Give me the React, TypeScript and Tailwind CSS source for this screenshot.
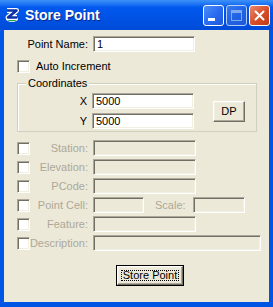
const sunken =
  "border border-t-[#aca899] border-l-[#aca899] border-b-white border-r-white shadow-[inset_1px_1px_0_#716f64,inset_-1px_-1px_0_#f1efe2]";

const raised =
  "border border-t-white border-l-white border-b-[#716f64] border-r-[#716f64] shadow-[inset_-1px_-1px_0_#aca899,inset_1px_1px_0_#f1efe2] bg-[#ece9d8]";

function Field({ value, className }: { value?: string; className: string }) {
  return (
    <div
      className={`h-[16px] ${sunken} ${value !== undefined ? "bg-white" : "bg-[#ece9d8]"} flex items-center pl-[3px] text-black leading-none ${className}`}
    >
      {value}
    </div>
  );
}

function Check() {
  return <div className={`w-[13px] h-[13px] shrink-0 bg-white ${sunken}`} />;
}

function OptionRow({ label }: { label: string }) {
  return (
    <div className="flex items-center h-[16px]">
      <Check />
      <div className="w-[58px] flex justify-end whitespace-nowrap text-[#aca899]">
        {label}
      </div>
      <Field className="ml-[5px] w-[103px]" />
    </div>
  );
}

function AppIcon() {
  return (
    <svg width="16" height="16" viewBox="0 0 16 16">
      <ellipse cx="8" cy="12" rx="6" ry="3" fill="#fff" />
      <ellipse cx="8" cy="12" rx="5" ry="2.2" fill="#1fa83c" />
      <path
        d="M3 3.5 H12.5 L4 10.5 H13"
        fill="none"
        stroke="#fff"
        strokeWidth="5"
        strokeLinejoin="round"
      />
      <path
        d="M3 3.5 H12.5 L4 10.5 H13"
        fill="none"
        stroke="#0b2fa8"
        strokeWidth="2.6"
        strokeLinejoin="round"
      />
    </svg>
  );
}

function TitleButton({ kind }: { kind: "min" | "max" | "close" }) {
  const bg =
    kind === "close"
      ? "bg-linear-to-br from-[#e8886a] via-[#d9502a] to-[#c23a12]"
      : kind === "max"
        ? "bg-linear-to-br from-[#4f8af0] via-[#2f6ae6] to-[#2a5fd6] opacity-70"
        : "bg-linear-to-br from-[#4d8ef8] via-[#2b6cf0] to-[#1f56dd]";
  return (
    <div
      className={`w-[21px] h-[21px] rounded-[3px] border border-white flex items-center justify-center relative ${bg}`}
    >
      {kind === "min" && (
        <div className="absolute left-[4px] bottom-[4px] w-[7px] h-[3px] bg-white" />
      )}
      {kind === "max" && (
        <div className="w-[11px] h-[11px] border border-[#b8cdf4] border-t-[3px]" />
      )}
      {kind === "close" && (
        <svg width="11" height="11" viewBox="0 0 11 11">
          <path
            d="M1.5 1.5 L9.5 9.5 M9.5 1.5 L1.5 9.5"
            stroke="#fff"
            strokeWidth="2"
            strokeLinecap="round"
          />
        </svg>
      )}
    </div>
  );
}

export default function App() {
  return (
    <div className="w-[273px] h-[307px] bg-[#0055e5] flex flex-col font-['Liberation_Sans',Arial,sans-serif] text-[11px] text-black overflow-hidden">

      {/* Title bar */}
      <div className="h-[30px] shrink-0 flex items-center pl-[4px] pr-[3px] bg-linear-to-b from-[#3d91f8] via-[#0058ee] via-25% to-[#004bd8]">
        <AppIcon />
        <div className="ml-[5px] text-white font-bold text-[14px] leading-none [text-shadow:1px_1px_0_#0a2a8a]">
          Store Point
        </div>
        <div className="ml-auto flex gap-[2px]">
          <TitleButton kind="min" />
          <TitleButton kind="max" />
          <TitleButton kind="close" />
        </div>
      </div>

      {/* Client area */}
      <div className="flex-1 mx-[4px] mb-[5px] bg-[#ece9d8] flex flex-col pt-[6px] pl-[13px] leading-[13px]">

        <div className="flex items-center h-[16px]">
          <div className="w-[71px] text-right whitespace-nowrap">Point Name:</div>
          <Field value="1" className="ml-[5px] w-[102px]" />
        </div>

        <div className="flex items-center h-[13px] mt-[8px]">
          <Check />
          <div className="ml-[6px]">Auto Increment</div>
        </div>

        <fieldset className="mt-[4px] w-[240px] border border-[#d0d0bf] shadow-[inset_1px_1px_0_#fff] pb-[2px]">
          <legend className="ml-[8px] px-[2px] bg-[#ece9d8] leading-[13px]">Coordinates</legend>
          <div className="flex items-center pt-[3px]">
            <div className="flex flex-col gap-[4px]">
              <div className="flex items-center h-[16px]">
                <div className="w-[69px] text-right">X</div>
                <Field value="5000" className="ml-[5px] w-[102px]" />
              </div>
              <div className="flex items-center h-[16px]">
                <div className="w-[69px] text-right">Y</div>
                <Field value="5000" className="ml-[5px] w-[102px]" />
              </div>
            </div>
            <div className={`ml-[19px] w-[32px] h-[21px] ${raised} flex items-center justify-center`}>
              DP
            </div>
          </div>
        </fieldset>

        <div className="mt-[8px] flex flex-col gap-[3px]">
          <OptionRow label="Station:" />
          <OptionRow label="Elevation:" />
          <OptionRow label="PCode:" />
          <div className="flex items-center h-[16px]">
            <Check />
            <div className="w-[58px] flex justify-end whitespace-nowrap text-[#aca899]">
              Point Cell:
            </div>
            <Field className="ml-[5px] w-[51px]" />
            <div className="ml-[11px] text-[#aca899]">Scale:</div>
            <Field className="ml-[7px] w-[52px]" />
          </div>
          <OptionRow label="Feature:" />
          <div className="flex items-center h-[16px]">
            <Check />
            <div className="w-[58px] flex justify-end whitespace-nowrap text-[#aca899]">
              Description:
            </div>
            <Field className="ml-[5px] w-[168px]" />
          </div>
        </div>

        <div className="mt-[14px] ml-[99px] w-[68px] h-[21px] border border-black">
          <div className={`w-full h-full ${raised} flex items-center justify-center p-[3px]`}>
            <div className="w-full h-full border border-dotted border-black flex items-center justify-center">
              Store Point
            </div>
          </div>
        </div>

      </div>
    </div>
  );
}
